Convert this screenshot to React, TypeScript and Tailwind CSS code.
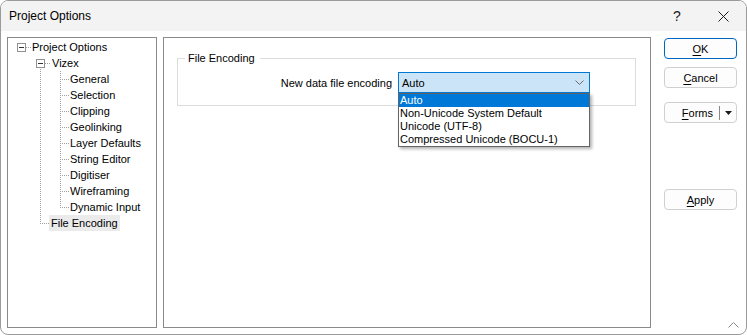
import React from "react";

type Kind = "root" | "vizex" | "child" | "last" | "file";

const DOT = { stroke: "#a0a0a0", strokeWidth: 1, strokeDasharray: "1 1" };

function TreeLines({ kind }: { kind: Kind }) {
  const width = { root: 24, vizex: 44, child: 62, last: 62, file: 41 }[kind];
  return (
    <svg width={width} height={16} viewBox={`8 0 ${width} 16`} className="shrink-0">
      {kind === "root" && (
        <>
          <rect x={17.5} y={4.5} width={8} height={8} fill="#fff" stroke="#919191" />
          <line x1={19} x2={24} y1={8.5} y2={8.5} stroke="#333" />
          <line x1={26} x2={31} y1={8.5} y2={8.5} {...DOT} />
        </>
      )}
      {kind === "vizex" && (
        <>
          <rect x={36.5} y={4.5} width={8} height={8} fill="#fff" stroke="#919191" />
          <line x1={38} x2={43} y1={8.5} y2={8.5} stroke="#333" />
          <line x1={45} x2={51} y1={8.5} y2={8.5} {...DOT} />
          <line x1={40.5} x2={40.5} y1={14} y2={16} {...DOT} />
        </>
      )}
      {(kind === "child" || kind === "last") && (
        <>
          <line x1={40.5} x2={40.5} y1={0} y2={16} {...DOT} />
          <line x1={60.5} x2={60.5} y1={0} y2={kind === "last" ? 9 : 16} {...DOT} />
          <line x1={62} x2={69} y1={8.5} y2={8.5} {...DOT} />
        </>
      )}
      {kind === "file" && (
        <>
          <line x1={40.5} x2={40.5} y1={0} y2={9} {...DOT} />
          <line x1={42} x2={49} y1={8.5} y2={8.5} {...DOT} />
        </>
      )}
    </svg>
  );
}

const TREE: { label: string; kind: Kind }[] = [
  { label: "Project Options", kind: "root" },
  { label: "Vizex", kind: "vizex" },
  { label: "General", kind: "child" },
  { label: "Selection", kind: "child" },
  { label: "Clipping", kind: "child" },
  { label: "Geolinking", kind: "child" },
  { label: "Layer Defaults", kind: "child" },
  { label: "String Editor", kind: "child" },
  { label: "Digitiser", kind: "child" },
  { label: "Wireframing", kind: "child" },
  { label: "Dynamic Input", kind: "last" },
  { label: "File Encoding", kind: "file" },
];

const OPTIONS = ["Auto", "Non-Unicode System Default", "Unicode (UTF-8)", "Compressed Unicode (BOCU-1)"];

function Button({ children, primary }: { children: React.ReactNode; primary?: boolean }) {
  return (
    <div
      className={`flex h-[21px] items-center justify-center rounded-[4px] border bg-[#fdfdfd] ${
        primary ? "border-[#0067c0]" : "border-[#d0d0d0]"
      }`}
    >
      {children}
    </div>
  );
}

export default function App() {
  return (
    <div className="h-[335px] w-[747px] bg-white font-['Liberation_Sans',Arial,sans-serif] text-[11px] leading-[16px] text-black">
      <div className="relative flex h-full w-full flex-col overflow-hidden rounded-[8px] border border-[#9b9b9b] bg-white">
        <div className="flex h-[30px] shrink-0 items-center bg-[#f3f3f3]">
          <span className="pl-[8px] text-[12px]">Project Options</span>
          <div className="ml-auto flex h-full">
            <div className="flex w-[46px] items-center justify-center text-[14px] text-[#1a1a1a]">?</div>
            <div className="flex w-[46px] items-center justify-center">
              <svg width="11" height="11" viewBox="0 0 11 11">
                <path d="M0.5 0.5 L10.5 10.5 M10.5 0.5 L0.5 10.5" stroke="#1a1a1a" strokeWidth="1" fill="none" />
              </svg>
            </div>
          </div>
        </div>

        <div className="flex flex-1 px-[6px] pt-[6px]">
          <div className="h-[291px] w-[150px] shrink-0 border border-[#8a8a8a] pt-[1px]">
            {TREE.map((row) => (
              <div key={row.label} className="flex h-[16px] items-center">
                <TreeLines kind={row.kind} />
                <span className={row.kind === "file" ? "bg-[#ebebeb] px-[2px]" : ""}>{row.label}</span>
              </div>
            ))}
          </div>

          <div className="ml-[6px] h-[291px] w-[488px] shrink-0 border border-[#8a8a8a]">
            <fieldset className="ml-[13px] mt-[12px] w-[459px] border border-[#dcdcdc] p-0">
              <legend className="ml-[7px] px-[3px] pr-[5px]">File Encoding</legend>
              <div className="flex items-center pb-[12px] pt-[6px]">
                <span className="w-[214px] text-right">New data file encoding</span>
                <div className="relative ml-[6px] w-[192px]">
                  <div className="flex h-[21px] items-center border border-[#0078d4] bg-[#cce4f7] pl-[3px] pr-[5px]">
                    <span>Auto</span>
                    <svg className="ml-auto" width="9" height="5" viewBox="0 0 9 5">
                      <path d="M0.5 0.5 L4.5 4.5 L8.5 0.5" stroke="#6a6a6a" fill="none" />
                    </svg>
                  </div>
                  <div className="absolute left-0 top-full z-10 w-full border border-[#646464] bg-white shadow-[2px_2px_3px_rgba(0,0,0,0.3)]">
                    {OPTIONS.map((opt, i) => (
                      <div
                        key={opt}
                        className={`h-[13px] pl-[1px] leading-[13px] ${i === 0 ? "bg-[#0078d7] text-white" : ""}`}
                      >
                        {opt}
                      </div>
                    ))}
                  </div>
                </div>
              </div>
            </fieldset>
          </div>

          <div className="ml-[13px] mt-[1px] flex w-[73px] shrink-0 flex-col">
            <Button primary>
              <span className="underline underline-offset-2">O</span>K
            </Button>
            <div className="mt-[8px]">
              <Button>
                <span className="underline underline-offset-2">C</span>ancel
              </Button>
            </div>
            <div className="mt-[14px] flex h-[21px] items-center rounded-[4px] border border-[#d0d0d0] bg-[#fdfdfd]">
              <span className="flex-1 pr-[6px] text-right">
                <span className="underline underline-offset-2">F</span>orms
              </span>
              <span className="h-[14px] w-px bg-[#8a8a8a]" />
              <span className="flex w-[16px] items-center justify-center">
                <svg width="7" height="4" viewBox="0 0 7 4">
                  <path d="M0 0 L7 0 L3.5 4 Z" fill="#1a1a1a" />
                </svg>
              </span>
            </div>
            <div className="mt-[66px]">
              <Button>
                <span className="underline underline-offset-2">A</span>pply
              </Button>
            </div>
          </div>
        </div>

        <svg className="absolute bottom-[6px] right-[7px]" width="11" height="6" viewBox="0 0 11 6">
          <path d="M0.5 5.5 L5.5 0.5 L10.5 5.5" stroke="#8a8a8a" fill="none" />
        </svg>
      </div>
    </div>
  );
}
